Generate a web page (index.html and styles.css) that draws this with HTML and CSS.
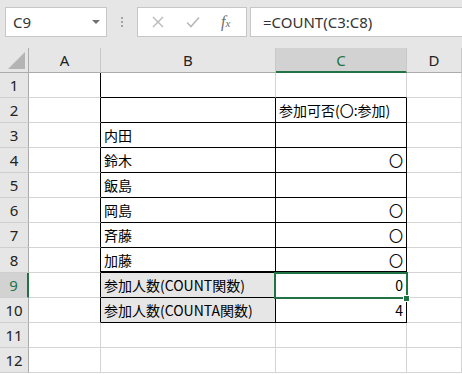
FILE: index.html
```html
<!DOCTYPE html>
<html lang="ja">
<head>
    <meta charset="UTF-8">
    <title>COUNT</title>
    <link rel="stylesheet" href="styles.css">
</head>
<body>

    <!-- Name box and formula bar -->
    <div class="toolbar">
        <div class="name-box">
            <span>C9</span>
            <span class="drop"></span>
        </div>
        <div class="grip"><i></i><i></i><i></i></div>
        <div class="fx-box">
            <svg class="ico" width="12" height="12" viewBox="0 0 12 12"><path d="M1 1L11 11M11 1L1 11" stroke="#b9b9b9" stroke-width="1.4" fill="none"/></svg>
            <svg class="ico" width="14" height="12" viewBox="0 0 14 12"><path d="M1 6.5L5 10.5L13 1.5" stroke="#b9b9b9" stroke-width="1.6" fill="none"/></svg>
            <span class="fx">f<small>x</small></span>
        </div>
        <div class="formula">=COUNT(C3:C8)</div>
    </div>

    <!-- Sheet grid -->
    <div class="sheet">
        <div class="corner"><span class="tri"></span></div>
        <div class="col-head">A</div>
        <div class="col-head">B</div>
        <div class="col-head active">C</div>
        <div class="col-head">D</div>

        <div class="row-head">1</div>
        <div class="cell bl"></div>
        <div class="cell bt"></div>
        <div class="cell bt"></div>
        <div class="cell"></div>

        <div class="row-head">2</div>
        <div class="cell bl"></div>
        <div class="cell box"></div>
        <div class="cell box">参加可否(〇:参加)</div>
        <div class="cell"></div>

        <div class="row-head">3</div>
        <div class="cell bl"></div>
        <div class="cell box">内田</div>
        <div class="cell box num"></div>
        <div class="cell"></div>

        <div class="row-head">4</div>
        <div class="cell bl"></div>
        <div class="cell box">鈴木</div>
        <div class="cell box num">〇</div>
        <div class="cell"></div>

        <div class="row-head">5</div>
        <div class="cell bl"></div>
        <div class="cell box">飯島</div>
        <div class="cell box num"></div>
        <div class="cell"></div>

        <div class="row-head">6</div>
        <div class="cell bl"></div>
        <div class="cell box">岡島</div>
        <div class="cell box num">〇</div>
        <div class="cell"></div>

        <div class="row-head">7</div>
        <div class="cell bl"></div>
        <div class="cell box">斉藤</div>
        <div class="cell box num">〇</div>
        <div class="cell"></div>

        <div class="row-head">8</div>
        <div class="cell bl"></div>
        <div class="cell box thick">加藤</div>
        <div class="cell box thick num">〇</div>
        <div class="cell"></div>

        <div class="row-head active">9</div>
        <div class="cell bl"></div>
        <div class="cell box shade">参加人数(COUNT関数)</div>
        <div class="cell box num selected">0</div>
        <div class="cell"></div>

        <div class="row-head">10</div>
        <div class="cell bl"></div>
        <div class="cell box shade">参加人数(COUNTA関数)</div>
        <div class="cell box num">4</div>
        <div class="cell"></div>

        <div class="row-head">11</div>
        <div class="cell"></div>
        <div class="cell"></div>
        <div class="cell"></div>
        <div class="cell"></div>

        <div class="row-head">12</div>
        <div class="cell"></div>
        <div class="cell"></div>
        <div class="cell"></div>
        <div class="cell"></div>
    </div>

</body>
</html>
```

FILE: styles.css
```css
/* General */
html, body {
    height: 374px;
    overflow: hidden;
}

body {
    margin: 0;
    background: #fff;
    font-family: "Noto Sans CJK JP", sans-serif;
    color: #000;
}

/* Formula bar */
.toolbar {
    height: 48px;
    background: #e6e6e6;
    display: flex;
    align-items: flex-start;
    padding-top: 7px;
    box-sizing: border-box;
    overflow: hidden;
}

.name-box {
    margin-left: 5px;
    width: 102px;
    height: 30px;
    box-sizing: border-box;
    background: #fff;
    border: 1px solid #c6c6c6;
    display: flex;
    align-items: center;
    justify-content: space-between;
    padding: 0 6px 0 7px;
    font-family: "Noto Sans", sans-serif;
    font-size: 15px;
    color: #333;
}

.drop {
    width: 0;
    height: 0;
    border-left: 4px solid transparent;
    border-right: 4px solid transparent;
    border-top: 4px solid #707070;
}

.grip {
    width: 30px;
    height: 30px;
    display: flex;
    flex-direction: column;
    align-items: center;
    justify-content: center;
    gap: 2px;
}

.grip i {
    width: 2px;
    height: 2px;
    background: #a3a3a3;
}

.fx-box {
    width: 110px;
    height: 30px;
    box-sizing: border-box;
    background: #fff;
    border: 1px solid #c6c6c6;
    display: flex;
    align-items: center;
    padding-left: 14px;
    gap: 22px;
}

.fx {
    font-family: "Liberation Serif", serif;
    font-style: italic;
    font-size: 16px;
    color: #6e6e6e;
    margin-left: -1px;
}

.fx small {
    font-size: 11px;
}

.formula {
    margin-left: 3px;
    flex: 1;
    height: 30px;
    box-sizing: border-box;
    background: #fff;
    border: 1px solid #c6c6c6;
    border-right: none;
    padding-left: 12px;
    line-height: 28px;
    font-family: "Noto Sans", sans-serif;
    font-size: 15px;
    color: #333;
}

/* Sheet */
.sheet {
    display: grid;
    grid-template-columns: 29px 72px 175px 131px 1fr;
    grid-template-rows: repeat(13, 25px);
}

.corner, .col-head, .row-head, .cell {
    box-sizing: border-box;
}

.corner {
    background: #e6e6e6;
    border-right: 1px solid #ababab;
    border-bottom: 1px solid #ababab;
    position: relative;
}

.tri {
    position: absolute;
    right: 3px;
    bottom: 3px;
    width: 0;
    height: 0;
    border-left: 17px solid transparent;
    border-bottom: 17px solid #b4b4b4;
}

.col-head {
    background: #e6e6e6;
    border-right: 1px solid #c8c8c8;
    border-bottom: 1px solid #ababab;
    text-align: center;
    font-family: "Noto Sans", sans-serif;
    font-size: 15px;
    line-height: 24px;
    color: #222;
}

.col-head.active {
    background: #d2d2d2;
    color: #217346;
    border-bottom: 2px solid #217346;
}

.row-head {
    background: #e6e6e6;
    border-right: 1px solid #ababab;
    border-bottom: 1px solid #cfcfcf;
    text-align: center;
    font-family: "Noto Sans", sans-serif;
    font-size: 15px;
    line-height: 24px;
    color: #222;
}

.row-head.active {
    background: #d2d2d2;
    color: #217346;
    border-right: 2px solid #217346;
}

.cell {
    border-right: 1px solid #d4d4d4;
    border-bottom: 1px solid #d4d4d4;
    font-size: 14px;
    line-height: 25px;
    padding: 0 3px;
    white-space: nowrap;
    overflow: hidden;
}

/* Table borders B2:C10 */
.cell.bl {
    border-right-color: #000;
}

.cell.bt {
    border-bottom-color: #000;
}

.cell.box {
    border-right-color: #000;
    border-bottom-color: #000;
}

.cell.thick {
    border-bottom-width: 2px;
}

.cell.shade {
    background: #e7e6e6;
}

.cell.num {
    text-align: right;
}

/* Active cell */
.cell.selected {
    position: relative;
    overflow: visible;
}

.cell.selected::after {
    content: "";
    position: absolute;
    left: -2px;
    top: -1px;
    right: -2px;
    bottom: -2px;
    border: 2px solid #217346;
}

.cell.selected::before {
    content: "";
    position: absolute;
    right: -4px;
    bottom: -5px;
    width: 5px;
    height: 5px;
    background: #217346;
    border: 1px solid #fff;
    z-index: 1;
}
```
